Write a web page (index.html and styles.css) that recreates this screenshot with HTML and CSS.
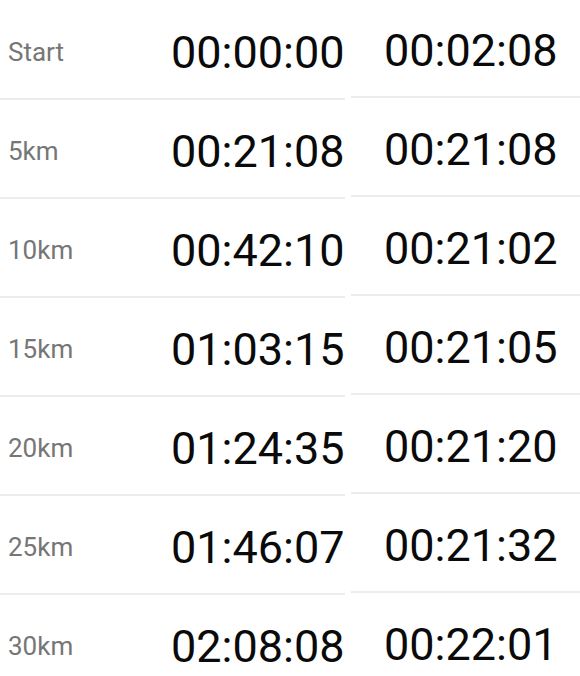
FILE: index.html
```html
<!DOCTYPE html>
<html>
<head>
<meta charset="utf-8">
<link rel="stylesheet" href="styles.css">
</head>
<body>
<div class="splits">
  <div class="table table-left">
    <div class="row"><span class="label">Start</span><span class="time">00:00:00</span></div>
    <div class="row"><span class="label">5km</span><span class="time">00:21:08</span></div>
    <div class="row"><span class="label">10km</span><span class="time">00:42:10</span></div>
    <div class="row"><span class="label">15km</span><span class="time">01:03:15</span></div>
    <div class="row"><span class="label">20km</span><span class="time">01:24:35</span></div>
    <div class="row"><span class="label">25km</span><span class="time">01:46:07</span></div>
    <div class="row"><span class="label">30km</span><span class="time">02:08:08</span></div>
  </div>
  <div class="table table-right">
    <div class="row"><span class="time">00:02:08</span></div>
    <div class="row"><span class="time">00:21:08</span></div>
    <div class="row"><span class="time">00:21:02</span></div>
    <div class="row"><span class="time">00:21:05</span></div>
    <div class="row"><span class="time">00:21:20</span></div>
    <div class="row"><span class="time">00:21:32</span></div>
    <div class="row"><span class="time">00:22:01</span></div>
  </div>
</div>
</body>
</html>
```
FILE: styles.css
```css
html, body {
  margin: 0;
  padding: 0;
  background: #ffffff;
  font-family: Roboto, "Noto Sans", sans-serif;
  overflow: hidden;
}
.splits {
  display: flex;
  align-items: flex-start;
  width: 580px;
}
.table {
  display: flex;
  flex-direction: column;
}
.table-left {
  width: 345px;
  margin-top: 1px;
}
.table-right {
  flex: 1;
  margin-left: 6px;
  margin-top: -1px;
}
.row {
  display: flex;
  align-items: center;
  height: 92px;
  border-bottom: 2px solid #ececec;
  padding-top: 5px;
  box-sizing: content-box;
}
.label {
  width: 164px;
  padding-left: 8px;
  font-size: 26px;
  color: #767676;
}
.time {
  font-size: 45px;
  color: #0a0a0a;
}
.table-left .time {
  margin-left: -1px;
}
.table-right .row {
  padding-left: 33px;
}
```
